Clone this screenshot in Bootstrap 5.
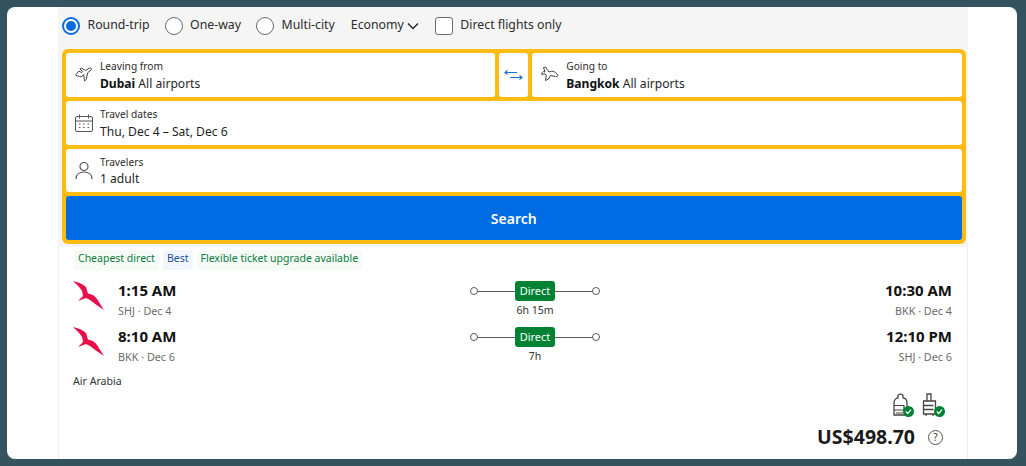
<!DOCTYPE html>
<html lang="en">
<head>
<meta charset="utf-8">
<title>Flights</title>
<link href="https://cdn.jsdelivr.net/npm/bootstrap@5.3.0/dist/css/bootstrap.min.css" rel="stylesheet">
<style>
html,body{height:466px;overflow:hidden}
body{background:#35535f;padding:7px 9px 7px 7px;font-family:"Noto Sans","Open Sans",sans-serif;color:#1a1a1a;font-size:12.300px;line-height:1.2}
.sheet{background:#fff;border-radius:8px;height:452px;padding:0 49px 0 51px;overflow:hidden}
.topzone{background:#f5f5f5;height:240px;padding:0 2px 0 4px}
.optrow{height:37px;margin-bottom:5px}
.radio-dot{width:18px;height:18px;border-radius:50%;border:1px solid #6b6b6b;background:#fff;flex:none}
.radio-dot.on{border:2px solid #0a6ce0;display:flex;align-items:center;justify-content:center}
.radio-dot.on::after{content:"";width:10px;height:10px;border-radius:50%;background:#0a6ce0}
.opt{font-size:12.300px;margin-left:7.500px;color:#2b2b2b}
.lgap{margin-left:15px}
.opt.econ{margin-left:16px}
.chev{margin-left:3px}
.check-box{width:18px;height:18px;border:1px solid #6b6b6b;border-radius:3px;background:#fff;flex:none;margin-left:16px}
.yellowbox{background:#febb11;border-radius:6px;padding:4px;gap:4px;height:195px;width:903.500px}
.fieldline{gap:4px;height:44px}
.fieldcell{background:#fff;border-radius:3px;height:44px;padding:0 0 0 9px}
.grow-even{flex:1 1 0}
.fieldcell svg{flex:none}
.fieldtxt{margin-left:7px;display:flex;flex-direction:column;padding-top:2px}
.lab{font-size:10.200px;line-height:14px;color:#2b2b2b}
.val{font-size:12.100px;line-height:18px;color:#1f1f1f;margin-top:1.500px}
.val b{font-weight:700;color:#111}
.swapcell{width:29px;flex:none;padding:0;justify-content:center}
.searchbtn{height:44px;background:#006ce4;border:0;color:#fff;font-weight:600;font-size:14px;border-radius:3px;width:100%}
.searchbtn:hover{background:#006ce4;color:#fff}
.resultcard{border-left:1px solid #eee;border-right:1px solid #eee;height:212px;padding:0 15px 0 14px}
.tagline{gap:4px;padding:3px 0 0 1px;height:23px}
.pill{font-size:10.500px;line-height:17px;padding:0 4px;color:#0b7a3b;background:#f6fbf8;border-radius:3px}
.pill.blue{color:#1a4f9c;background:#f2f7fd}
.legrow{height:46px;align-items:flex-start}
.firstleg{margin-top:11px}
.logobird{width:32px;flex:none;margin-right:13px}
.tm{font-size:15px;font-weight:700;line-height:18px;color:#111}
.sub{font-size:10.800px;line-height:14px;color:#6b6b6b;margin-top:5px}
.leftcol{width:245px;flex:none}
.rightcol{width:200px;flex:none;text-align:right}
.midcol{flex:1;display:flex;flex-direction:column;align-items:center}
.track{width:130px;height:20px;position:relative;display:flex;align-items:center;justify-content:center}
.track::before{content:"";position:absolute;left:4px;right:4px;top:50%;height:1px;background:#595959}
.stop{position:absolute;top:6px;width:8px;height:8px;border:1.500px solid #595959;border-radius:50%;background:#fff}
.stop.a{left:0}.stop.z{right:0}
.directtag{position:relative;background:#008234;color:#fff;font-size:11px;line-height:20px;padding:0 5px;border-radius:3px}
.dur{font-size:10.500px;line-height:14px;color:#333;margin-top:2px}
.carrier{font-size:10.600px;line-height:14px;color:#333;margin-top:1px}
.baggage{gap:7px;padding-right:7px;height:24px;margin-top:5px}
.pricerow{margin-top:8px;height:24px;padding-right:9px}
.amt{font-size:19.500px;font-weight:700;color:#1a1a1a}
.qmark{width:15px;height:15px;border:1px solid #555;border-radius:50%;font-size:10px;line-height:13px;text-align:center;margin-left:13px;color:#333}
</style>
</head>
<body>
<div class="sheet">
  <div class="topzone">
    <div class="d-flex align-items-center optrow">
      <span class="radio-dot on"></span><span class="opt">Round-trip</span>
      <span class="radio-dot lgap"></span><span class="opt">One-way</span>
      <span class="radio-dot lgap"></span><span class="opt">Multi-city</span>
      <span class="opt econ">Economy</span>
      <svg class="chev" width="12" height="8" viewBox="0 0 12 8"><path d="M1 1.500l5 5 5-5" fill="none" stroke="#222" stroke-width="1.400"/></svg>
      <span class="check-box"></span><span class="opt">Direct flights only</span>
    </div>
    <div class="yellowbox d-flex flex-column">
      <div class="d-flex fieldline">
        <div class="fieldcell grow-even d-flex align-items-center">
          <svg width="18" height="18" viewBox="0 0 18 18"><path d="M.8 8.500l3-3.300 3 1.300 1-1-3-2.500 1.700-.8 4.200 2.300 3.500-2.300c1.500-.8 3 .3 2 1.800l-3.500 2.700-1.500 6.800-1.700 1.500-.8-6.300-2.700 2.300-1.500-.5L1 9.500z" fill="none" stroke="#444" stroke-width="1" stroke-linejoin="round"/></svg>
          <div class="fieldtxt"><span class="lab">Leaving from</span><span class="val"><b>Dubai</b> All airports</span></div>
        </div>
        <div class="fieldcell swapcell d-flex align-items-center">
          <svg width="19" height="10" viewBox="0 0 19 10"><path d="M18 7.500H6M15.500 5.500l2.500 2-2.500 2M13 2.500H1M3.500.5L1 2.500l2.500 2" fill="none" stroke="#1a73d1" stroke-width="1.200"/></svg>
        </div>
        <div class="fieldcell grow-even d-flex align-items-center">
          <svg width="18" height="18" viewBox="0 0 18 18"><path d="M2.500 1.500l2-.5 3.500 5 2.800-.8c2.500-.3 5.500 2.500 6 4 .2 1.300-1 1.500-2.300 1.300L9.500 9.500l-2 3.500-3 1.500.8-5.500-2.300-1.500L1 9 .8 7l1.700-1.500 1.500.5z" fill="none" stroke="#444" stroke-width="1" stroke-linejoin="round"/></svg>
          <div class="fieldtxt"><span class="lab">Going to</span><span class="val"><b>Bangkok</b> All airports</span></div>
        </div>
      </div>
      <div class="fieldcell d-flex align-items-center">
        <svg width="18" height="18" viewBox="0 0 18 18"><rect x=".5" y="2.500" width="17" height="15" rx="1.500" fill="none" stroke="#555"/><path d="M.5 7h17M4.500 .5v4M13.500.5v4" stroke="#555" fill="none"/><path d="M4 10h1.500M8 10h1.500M12.500 10h1.500M4 13.500h1.500M8 13.500h1.500M12.500 13.500h1.500" stroke="#555" stroke-width="1.200"/></svg>
        <div class="fieldtxt"><span class="lab">Travel dates</span><span class="val">Thu, Dec 4 – Sat, Dec 6</span></div>
      </div>
      <div class="fieldcell d-flex align-items-center">
        <svg width="18" height="20" viewBox="0 0 18 20"><circle cx="9" cy="5.500" r="4" fill="none" stroke="#555" stroke-width="1.200"/><path d="M1 18c0-4.500 3.500-7 8-7s8 2.500 8 7" fill="none" stroke="#555" stroke-width="1.200"/></svg>
        <div class="fieldtxt"><span class="lab">Travelers</span><span class="val">1 adult</span></div>
      </div>
      <button type="button" class="btn searchbtn p-0">Search</button>
    </div>
  </div>
  <div class="resultcard">
    <div class="d-flex tagline">
      <span class="pill">Cheapest direct</span><span class="pill blue">Best</span><span class="pill">Flexible ticket upgrade available</span>
    </div>
    <div class="d-flex legrow firstleg">
      <div class="leftcol d-flex">
        <svg class="logobird" height="30" viewBox="0 0 32 30"><path d="M0 0C5 1 10 3 13 6L15 12.500C19 13 22 15 24 18L31 29C26 26 21 22 17 19L13 17 5 20 10 15 9 10C7 6 3 3 0 0Z" fill="#e8104a"/></svg>
        <div><div class="tm">1:15 AM</div><div class="sub">SHJ · Dec 4</div></div>
      </div>
      <div class="midcol">
        <div class="track"><i class="stop a"></i><span class="directtag">Direct</span><i class="stop z"></i></div>
        <div class="dur">6h 15m</div>
      </div>
      <div class="rightcol"><div class="tm">10:30 AM</div><div class="sub">BKK · Dec 4</div></div>
    </div>
    <div class="d-flex legrow">
      <div class="leftcol d-flex">
        <svg class="logobird" height="30" viewBox="0 0 32 30"><path d="M0 0C5 1 10 3 13 6L15 12.500C19 13 22 15 24 18L31 29C26 26 21 22 17 19L13 17 5 20 10 15 9 10C7 6 3 3 0 0Z" fill="#e8104a"/></svg>
        <div><div class="tm">8:10 AM</div><div class="sub">BKK · Dec 6</div></div>
      </div>
      <div class="midcol">
        <div class="track"><i class="stop a"></i><span class="directtag">Direct</span><i class="stop z"></i></div>
        <div class="dur">7h</div>
      </div>
      <div class="rightcol"><div class="tm">12:10 PM</div><div class="sub">SHJ · Dec 6</div></div>
    </div>
    <div class="carrier">Air Arabia</div>
    <div class="d-flex justify-content-end baggage">
      <svg width="24" height="24" viewBox="0 0 24 24"><path d="M4 22V10C4 7 6 5 8 4.800V3c0-2.500 5-2.500 5 0v1.800C15.500 5 17 7 17 10V22z" fill="none" stroke="#444" stroke-width="1.300"/><path d="M4 12.500h10v4.500H4M6 20h7" fill="none" stroke="#444" stroke-width="1.200"/><circle cx="18.500" cy="18.500" r="5.500" fill="#008234"/><path d="M15.800 18.500l2 2 3.200-3.800" fill="none" stroke="#fff" stroke-width="1.200"/></svg>
      <svg width="24" height="24" viewBox="0 0 24 24"><path d="M6 8V1h4v7M2.500 8h12v13h-12zM2.500 12.500h10M2.500 16.500h10M5 21v2M12 21v2" fill="none" stroke="#444" stroke-width="1.300"/><circle cx="18.500" cy="18.500" r="5.500" fill="#008234"/><path d="M15.800 18.500l2 2 3.200-3.800" fill="none" stroke="#fff" stroke-width="1.200"/></svg>
    </div>
    <div class="d-flex justify-content-end align-items-center pricerow">
      <span class="amt">US$498.70</span><span class="qmark">?</span>
    </div>
  </div>
</div>
<script src="https://cdn.jsdelivr.net/npm/bootstrap@5.3.0/dist/js/bootstrap.bundle.min.js"></script>
</body>
</html>
